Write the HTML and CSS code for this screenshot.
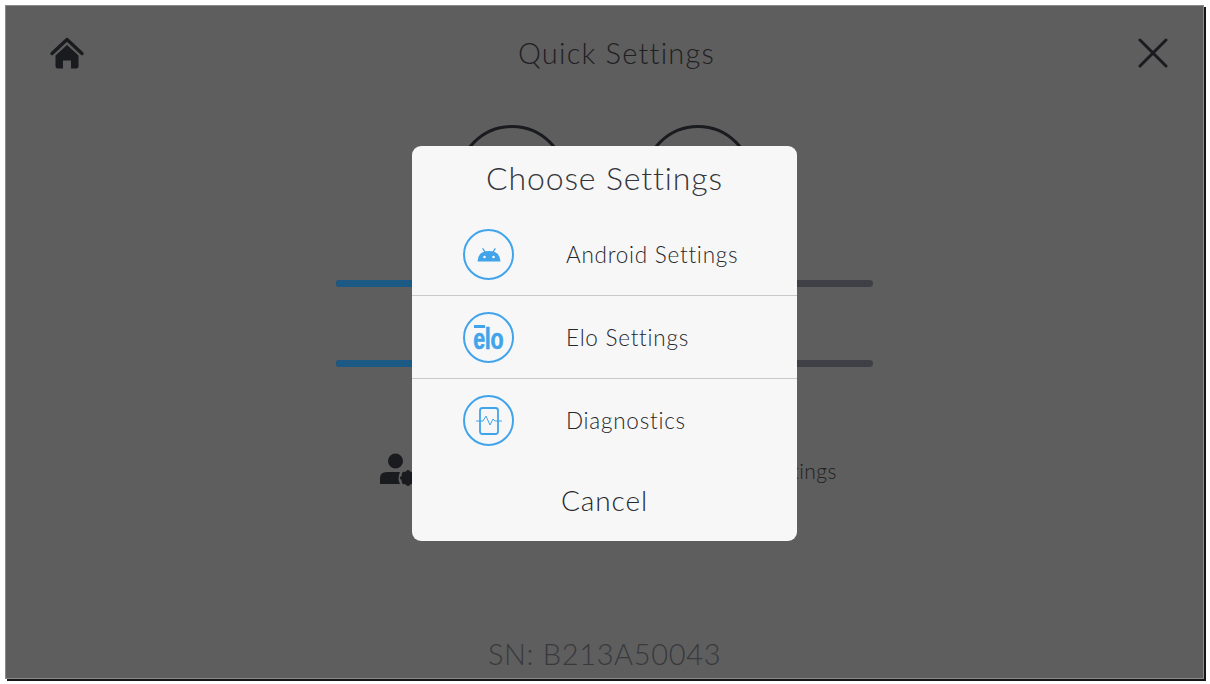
FILE: index.html
```html
<!DOCTYPE html>
<html lang="en">
<head>
    <meta charset="UTF-8">
    <title>Quick Settings</title>
    <link rel="stylesheet" href="styles.css">
</head>
<body>
    <div class="screen">
        <div class="top-bar">
            <svg class="home-icon" viewBox="0 0 36 36">
                <path d="M3 18.500 L18 4.500 L33 18.500" fill="none" stroke="#1a1b1e" stroke-width="3.400" stroke-linecap="round" stroke-linejoin="round"/>
                <path d="M18 10 L29.500 20.500 V31 Q29.500 33.500 27 33.500 H22 V25.500 H14 V33.500 H9 Q6.500 33.500 6.500 31 V20.500 Z" fill="#1a1b1e"/>
            </svg>
            <div class="page-title">Quick Settings</div>
            <svg class="close-icon" viewBox="0 0 30 30">
                <path d="M2 2 L28 28 M28 2 L2 28" stroke="#1a1b1e" stroke-width="3" stroke-linecap="round"/>
            </svg>
        </div>
        <div class="circles">
            <div class="circle"></div>
            <div class="circle"></div>
        </div>
        <div class="sliders">
            <div class="slider"><div class="slider-fill"></div></div>
            <div class="slider"><div class="slider-fill"></div></div>
        </div>
        <div class="options">
            <svg class="user-icon" viewBox="0 0 36 36">
                <circle cx="15.500" cy="9" r="7.500" fill="#1a1b1e"/>
                <path d="M0 32 V26 Q0 20 7 20 H20 Q17 27 20 32 Z" fill="#1a1b1e"/>
                <circle cx="28" cy="26" r="5" fill="none" stroke="#1a1b1e" stroke-width="4"/>
                <path d="M28 18 V34 M20 26 H36 M22.500 20.500 L33.500 31.500 M33.500 20.500 L22.500 31.500" stroke="#1a1b1e" stroke-width="2.500"/>
            </svg>
            <div class="option-text">Network Settings</div>
        </div>
        <div class="serial">SN: B213A50043</div>

        <div class="modal">
            <div class="modal-title">Choose Settings</div>
            <div class="modal-row">
                <div class="round-icon">
                    <svg class="android" viewBox="0 0 24 14">
                        <path d="M6 0.800 L8.200 4.500 M18 0.800 L15.800 4.500" stroke="#41a4ea" stroke-width="1.300" stroke-linecap="round"/>
                        <path d="M0.500 13.500 Q1 3 12 3 Q23 3 23.500 13.500 Z" fill="#41a4ea"/>
                        <circle cx="7.500" cy="9" r="1.300" fill="#f7f7f8"/>
                        <circle cx="16.500" cy="9" r="1.300" fill="#f7f7f8"/>
                    </svg>
                </div>
                <span class="row-label">Android Settings</span>
            </div>
            <div class="modal-row">
                <div class="round-icon">
                    <div class="elo-logo"><span class="elo-bar"></span>elo</div>
                </div>
                <span class="row-label">Elo Settings</span>
            </div>
            <div class="modal-row modal-row-last">
                <div class="round-icon">
                    <svg class="diag" viewBox="0 0 26 30">
                        <rect x="4" y="2" width="18" height="26" rx="2.500" fill="none" stroke="#41a4ea" stroke-width="1.800"/>
                        <path d="M0 15 H7 L10 10 L14 19 L17 13 L19 15 H26" fill="none" stroke="#41a4ea" stroke-width="1"/>
                    </svg>
                </div>
                <span class="row-label">Diagnostics</span>
            </div>
            <div class="modal-cancel">Cancel</div>
        </div>
    </div>
</body>
</html>
```

FILE: styles.css
```css
* {
    box-sizing: border-box;
}

body {
    margin: 0;
    width: 1210px;
    height: 684px;
    overflow: hidden;
    background-color: #ffffff;
    font-family: "Lato", sans-serif;
    padding: 5px 0 0 5px;
}

.screen {
    position: relative;
    width: 1199px;
    height: 674px;
    background-color: #5e5e5e;
    border: 1px solid #8a8a8a;
    box-shadow: 2px 2px 0 #161616;
    display: flex;
    flex-direction: column;
    align-items: center;
    color: #1f2023;
}

.top-bar {
    width: 100%;
    height: 95px;
    padding: 29px 35px 0 43px;
    display: flex;
    justify-content: space-between;
    align-items: flex-start;
}

.home-icon {
    width: 36px;
    height: 36px;
}

.page-title {
    font-size: 29px;
    font-weight: 300;
    letter-spacing: 1.2px;
    margin-left: 10px;
}

.close-icon {
    width: 30px;
    height: 30px;
    margin-top: 3px;
}

.circles {
    display: flex;
    gap: 76px;
    margin-top: 24px;
}

.circle {
    width: 110px;
    height: 110px;
    border: 3px solid #1a1b1e;
    border-radius: 50%;
}

.sliders {
    width: 537px;
    margin-top: 45px;
    display: flex;
    flex-direction: column;
    gap: 73px;
}

.slider {
    height: 7px;
    border-radius: 4px;
    background-color: #3f4045;
    overflow: hidden;
}

.slider-fill {
    width: 50%;
    height: 100%;
    background-color: #1c5a85;
}

.options {
    width: 537px;
    margin-top: 85px;
    padding-left: 44px;
    display: flex;
    align-items: center;
    justify-content: space-between;
}

.user-icon {
    width: 36px;
    height: 36px;
}

.option-text {
    font-size: 21px;
    font-weight: 300;
    letter-spacing: 0.5px;
    margin-right: 36px;
}

.serial {
    margin-top: auto;
    margin-bottom: 7px;
    font-size: 29px;
    font-weight: 300;
    letter-spacing: 0.65px;
    color: #38393d;
}

/* dialog over the page */
.modal {
    position: absolute;
    left: 406px;
    top: 140px;
    width: 385px;
    height: 395px;
    background-color: #f7f7f8;
    border-radius: 9px;
    color: #34353a;
    display: flex;
    flex-direction: column;
}

.modal-title {
    height: 67px;
    padding-top: 12px;
    text-align: center;
    font-size: 32px;
    font-weight: 300;
    letter-spacing: 0.85px;
}

.modal-row {
    height: 83px;
    display: flex;
    align-items: center;
    padding-left: 51px;
    padding-top: 1px;
    border-bottom: 1px solid #c9c9cb;
}

.modal-row-last {
    height: 82px;
    border-bottom: none;
}

.round-icon {
    width: 51px;
    height: 51px;
    border: 2px solid #41a4ea;
    border-radius: 50%;
    display: flex;
    align-items: center;
    justify-content: center;
    flex-shrink: 0;
}

.android {
    width: 24px;
    height: 14px;
}

.elo-logo {
    position: relative;
    font-family: "Liberation Sans", sans-serif;
    font-size: 29px;
    font-weight: 700;
    line-height: 24px;
    margin-top: 3px;
    color: #41a4ea;
    transform: scaleX(0.74);
    letter-spacing: -0.5px;
    -webkit-text-stroke: 0.6px #41a4ea;
}

.elo-bar {
    position: absolute;
    left: 1px;
    top: -2px;
    width: 15px;
    height: 3px;
    background-color: #41a4ea;
}

.diag {
    width: 26px;
    height: 30px;
}

.row-label {
    margin-left: 52px;
    margin-bottom: 1px;
    font-size: 22.5px;
    font-weight: 300;
    letter-spacing: 0.75px;
    color: #26272b;
}

.modal-cancel {
    flex: 1;
    display: flex;
    align-items: center;
    justify-content: center;
    padding-bottom: 2px;
    font-size: 28px;
    font-weight: 300;
    letter-spacing: 0.9px;
    color: #26272b;
}
```
